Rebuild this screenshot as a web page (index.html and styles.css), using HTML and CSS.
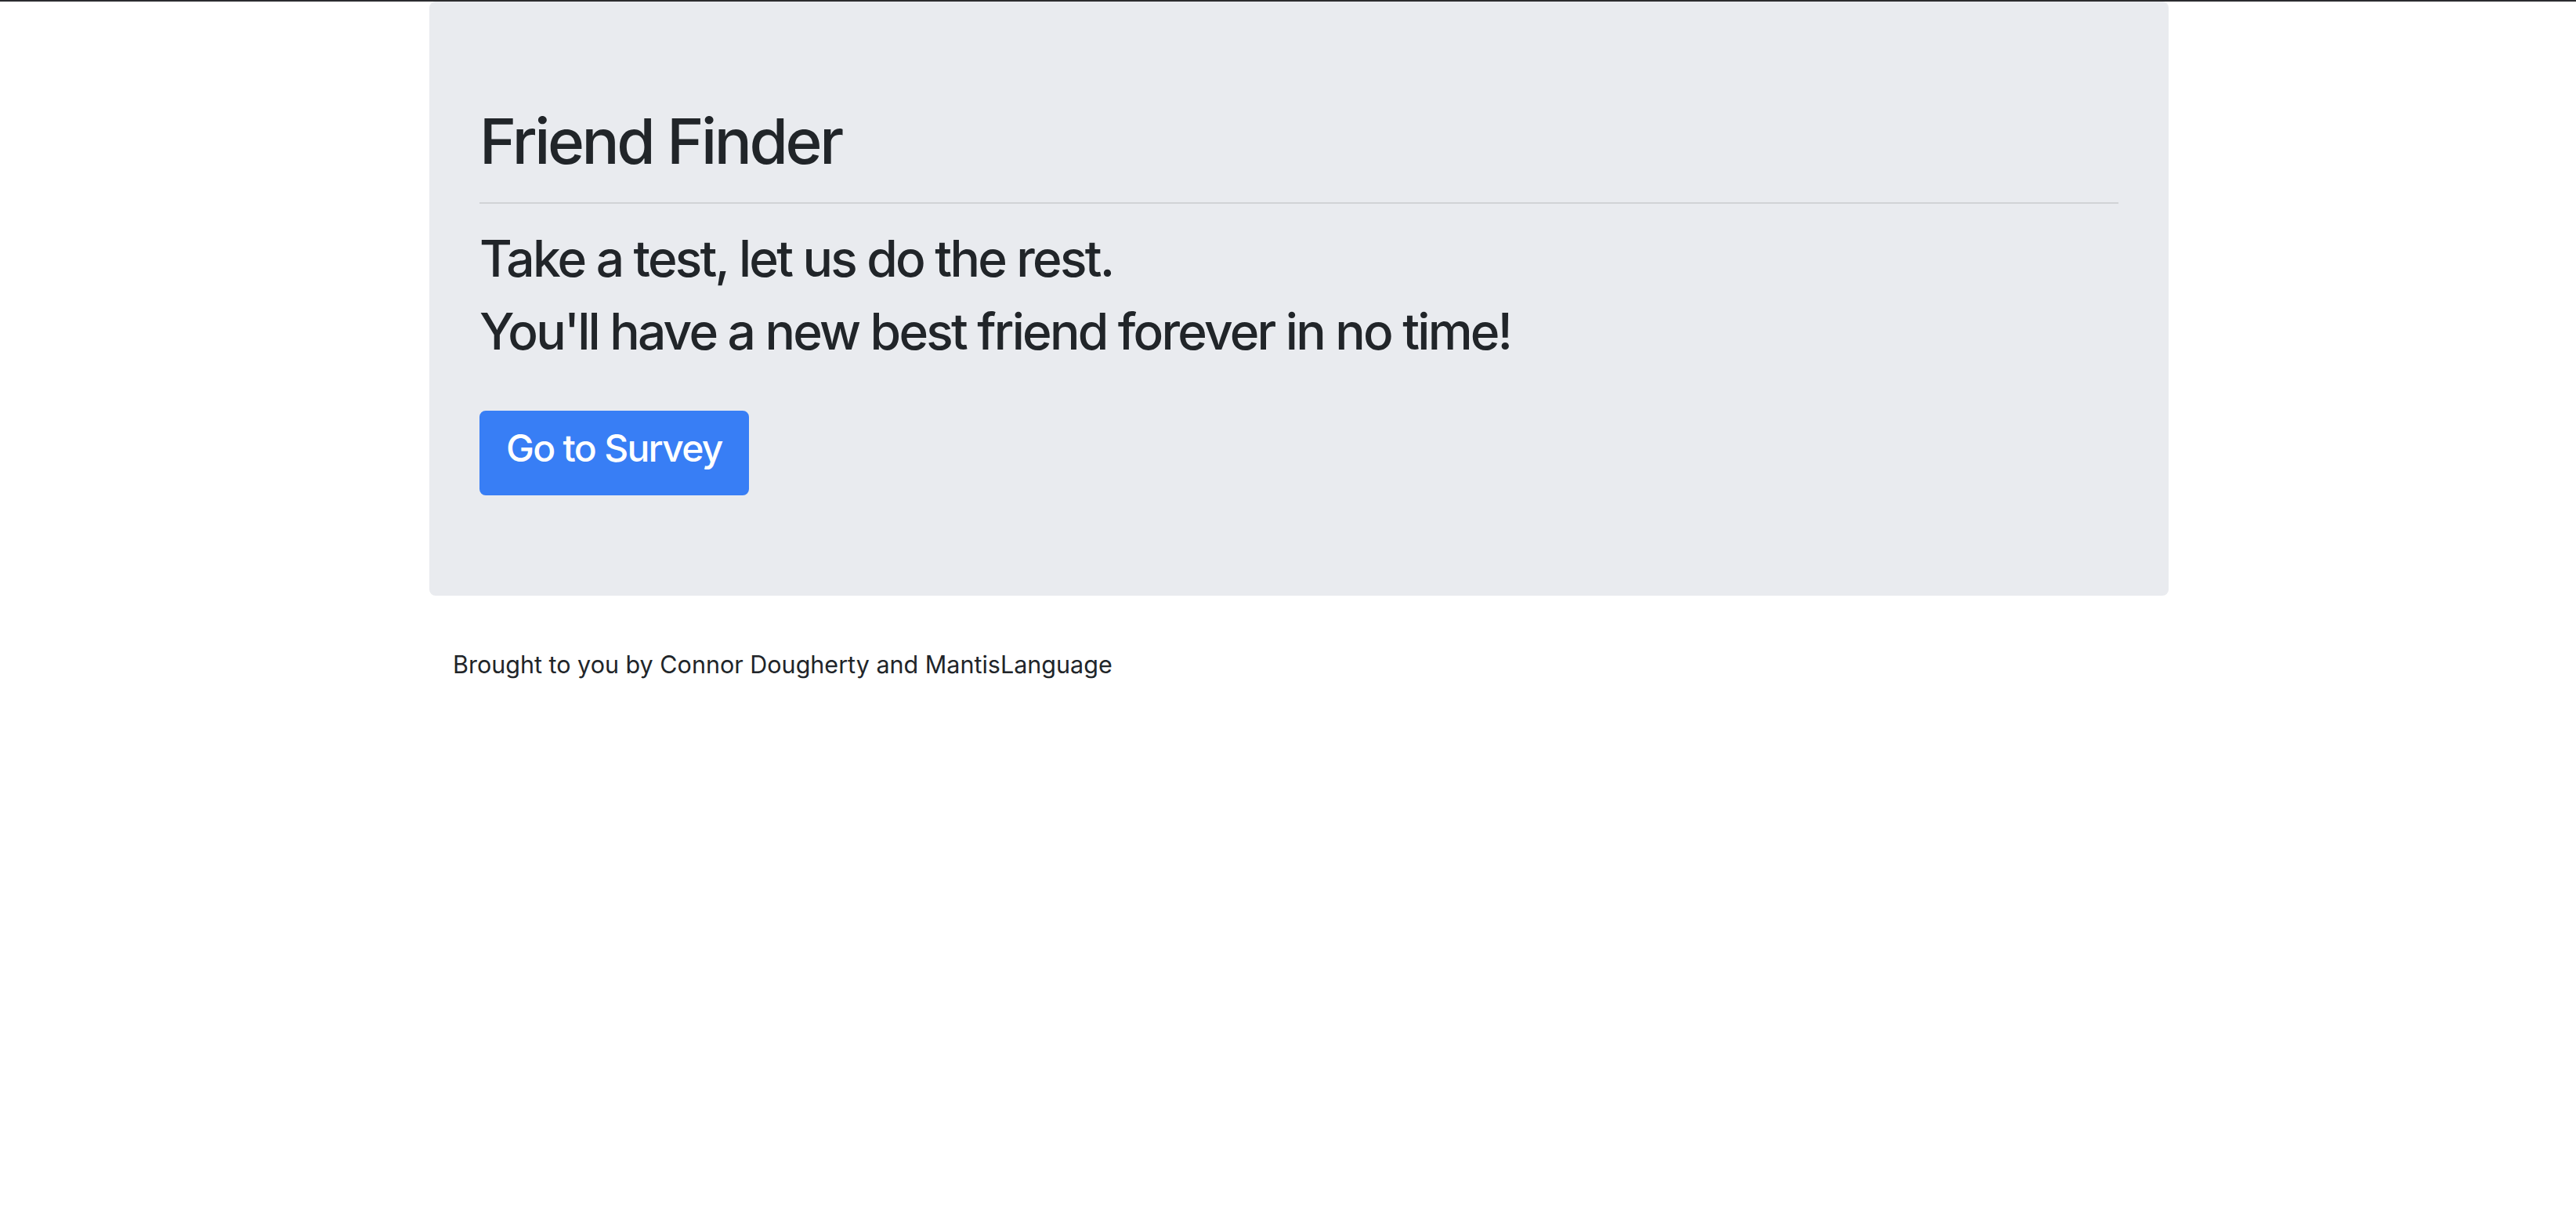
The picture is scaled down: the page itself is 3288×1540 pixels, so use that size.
FILE: index.html
```html
<!DOCTYPE html>
<html lang="en">
<head>
<meta charset="utf-8">
<title>Friend Finder</title>
<link rel="stylesheet" href="styles.css">
</head>
<body>
<div class="topbar"></div>
<div class="container">
  <div class="jumbotron">
    <h1 class="title">Friend Finder</h1>
    <hr class="divider">
    <h2 class="tagline">Take a test, let us do the rest.</h2>
    <h2 class="tagline">You'll have a new best friend forever in no time!</h2>
    <div class="actions">
      <a class="btn-primary" href="#">Go to Survey</a>
    </div>
  </div>
</div>
<footer class="container footer">
  <p class="credit">Brought to you by Connor Dougherty and MantisLanguage</p>
</footer>
</body>
</html>
```

FILE: styles.css
```css
* { box-sizing: border-box; }

html, body {
  margin: 0;
  padding: 0;
  background: #ffffff;
}

body {
  font-family: Inter, "Noto Sans", "Liberation Sans", sans-serif;
  color: #212529;
  font-size: 32px;
  line-height: 1.5;
}

.topbar {
  height: 2px;
  background: #2b2c2f;
}

.container {
  width: 2220px;
  margin-left: 548px;
}

.jumbotron {
  background: #e9ebef;
  border-radius: 8px;
  padding: 128px 64px;
  margin-bottom: 64px;
}

.title {
  margin: 0 0 16px;
  font-size: 80px;
  font-weight: 500;
  line-height: 1.2;
  letter-spacing: -3.4px;
  padding-top: 2px;
}

.divider {
  margin: 30px 0 32px;
  border: 0;
  border-top: 2px solid rgba(0, 0, 0, 0.1);
}

.tagline {
  margin: 0 0 16px;
  font-size: 64px;
  font-weight: 500;
  line-height: 1.2;
  letter-spacing: -2.75px;
}

.actions {
  margin-top: 62px;
  display: flex;
}

.btn-primary {
  display: inline-block;
  font-size: 48px;
  line-height: 1.5;
  padding: 10px 32px 22px;
  border: 2px solid #387ef5;
  border-radius: 8px;
  background: #387ef5;
  color: #ffffff;
  text-decoration: none;
  font-weight: 500;
  letter-spacing: -1.7px;
}

.footer {
  padding: 0 30px;
}

.credit {
  margin: 0;
  font-size: 30.5px;
  line-height: 1.5;
  padding-top: 1px;
}
```
